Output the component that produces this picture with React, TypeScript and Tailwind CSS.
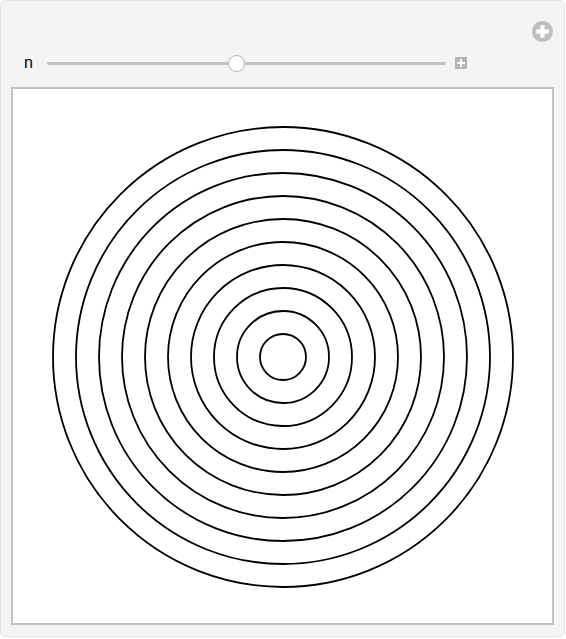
import React from "react"

const radii = Array.from({ length: 10 }, (_, i) => (i + 1) * 23)

function PlusCircle() {
  return (
    <svg width="21" height="21" viewBox="0 0 20 20">
      <circle cx="10" cy="10" r="10" fill="#bfbfbf" />
      <rect x="8" y="4" width="4" height="12" fill="#fff" />
      <rect x="4" y="8" width="12" height="4" fill="#fff" />
    </svg>
  )
}

export default function App() {
  return (
    <div className="w-[566px] h-[639px] bg-white" style={{ fontFamily: '"Liberation Sans", Arial, sans-serif' }}>
      <div className="w-[565px] h-[637px] bg-[#f4f4f4] border border-[#e2e2e2] rounded-[6px] pt-[20px] px-[10px]">
        <div className="flex justify-end h-[20px] pr-[1px]">
          <PlusCircle />
        </div>

        <div className="flex items-center h-[20px] mt-[12px]">
          <span className="ml-[13px] text-[16px] leading-none text-black">n</span>
          <div className="relative ml-[14px] w-[399px] h-[3px] rounded-full bg-[#c2c2c2]">
            <div className="absolute left-[181px] top-[-7px] w-[17px] h-[17px] rounded-full bg-white border border-[#b5b5b5]" />
          </div>
          <div className="ml-[9px] w-[12px] h-[12px] bg-[#b3b3b3] flex items-center justify-center">
            <svg width="8" height="8" viewBox="0 0 8 8">
              <rect x="3" y="0" width="2" height="8" fill="#fff" />
              <rect x="0" y="3" width="8" height="2" fill="#fff" />
            </svg>
          </div>
        </div>

        <div className="mt-[14px] w-[543px] h-[538px] border-2 border-[#c3c3c3] bg-white">
          <svg width="539" height="534" viewBox="0 0 539 534">
            {radii.map((r) => (
              <circle key={r} cx="270" cy="268" r={r} fill="none" stroke="#000" strokeWidth="1.8" />
            ))}
          </svg>
        </div>
      </div>
    </div>
  )
}
